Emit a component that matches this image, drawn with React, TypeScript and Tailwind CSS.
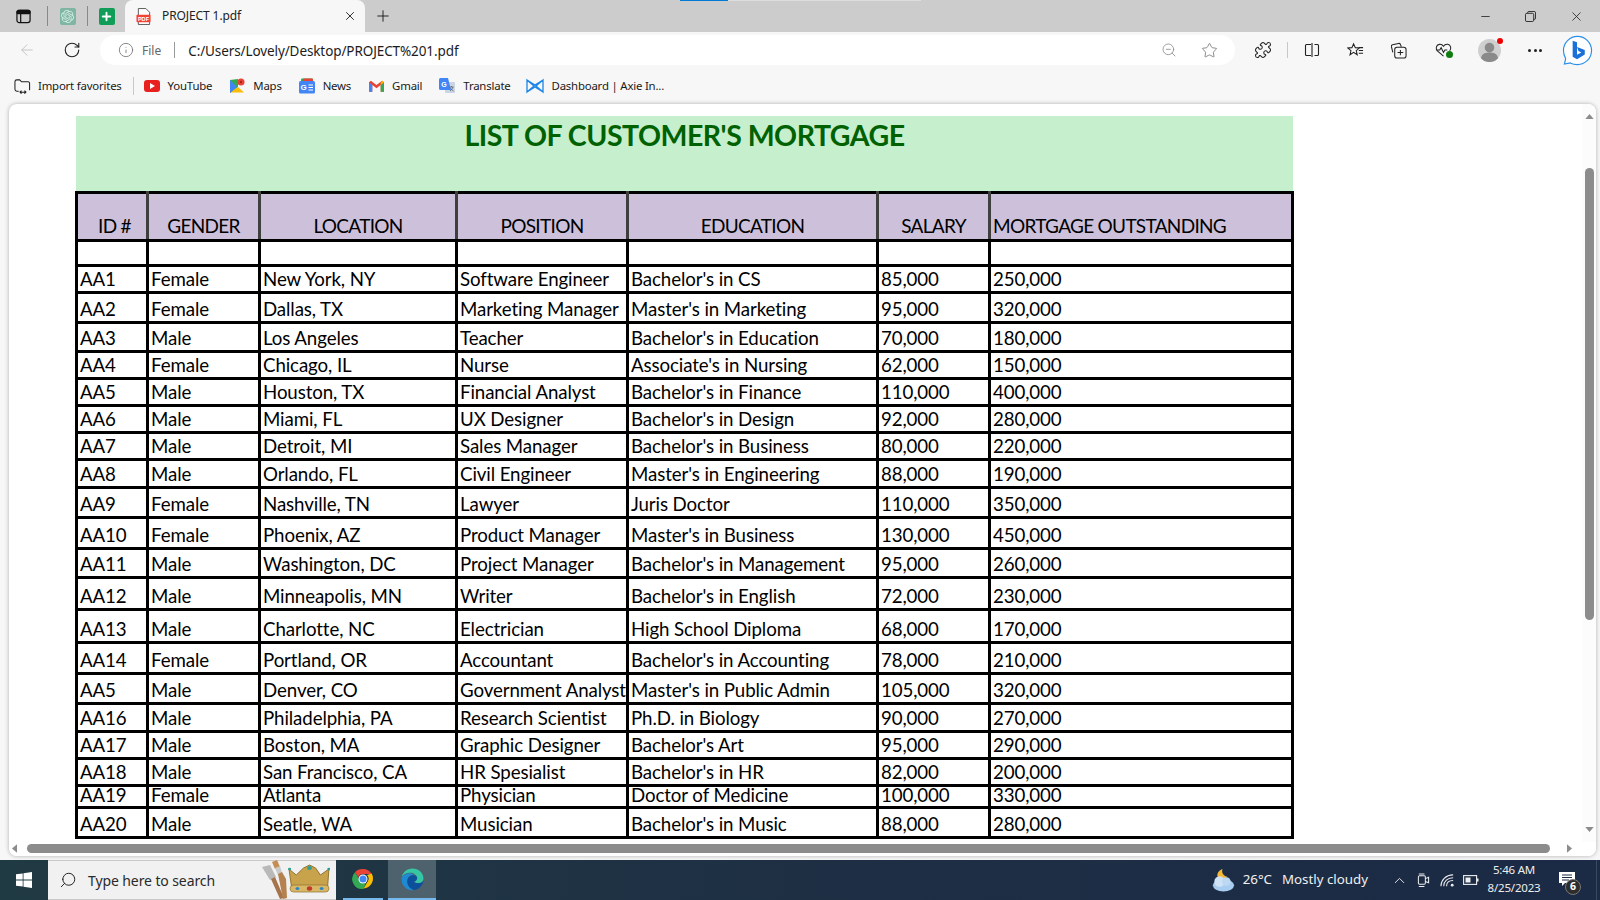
import React from "react";
import { ArrowLeft, RotateCw, Info, ZoomOut, Star, Puzzle, Minus, X, Plus, Search, ChevronUp } from "lucide-react";
import { SiOpenai } from "react-icons/si";

type Row = { h: number; c: string[] };
const rows: Row[] = [
  { h: 25, c: ["", "", "", "", "", "", ""] },
  { h: 27, c: ["AA1", "Female", "New York, NY", "Software Engineer", "Bachelor's in CS", "85,000", "250,000"] },
  { h: 30, c: ["AA2", "Female", "Dallas, TX", "Marketing Manager", "Master's in Marketing", "95,000", "320,000"] },
  { h: 29, c: ["AA3", "Male", "Los Angeles", "Teacher", "Bachelor's in Education", "70,000", "180,000"] },
  { h: 27, c: ["AA4", "Female", "Chicago, IL", "Nurse", "Associate's in Nursing", "62,000", "150,000"] },
  { h: 27, c: ["AA5", "Male", "Houston, TX", "Financial Analyst", "Bachelor's in Finance", "110,000", "400,000"] },
  { h: 27, c: ["AA6", "Male", "Miami, FL", "UX Designer", "Bachelor's in Design", "92,000", "280,000"] },
  { h: 27, c: ["AA7", "Male", "Detroit, MI", "Sales Manager", "Bachelor's in Business", "80,000", "220,000"] },
  { h: 28, c: ["AA8", "Male", "Orlando, FL", "Civil Engineer", "Master's in Engineering", "88,000", "190,000"] },
  { h: 30, c: ["AA9", "Female", "Nashville, TN", "Lawyer", "Juris Doctor", "110,000", "350,000"] },
  { h: 31, c: ["AA10", "Female", "Phoenix, AZ", "Product Manager", "Master's in Business", "130,000", "450,000"] },
  { h: 29, c: ["AA11", "Male", "Washington, DC", "Project Manager", "Bachelor's in Management", "95,000", "260,000"] },
  { h: 32, c: ["AA12", "Male", "Minneapolis, MN", "Writer", "Bachelor's in English", "72,000", "230,000"] },
  { h: 33, c: ["AA13", "Male", "Charlotte, NC", "Electrician", "High School Diploma", "68,000", "170,000"] },
  { h: 31, c: ["AA14", "Female", "Portland, OR", "Accountant", "Bachelor's in Accounting", "78,000", "210,000"] },
  { h: 30, c: ["AA5", "Male", "Denver, CO", "Government Analyst", "Master's in Public Admin", "105,000", "320,000"] },
  { h: 28, c: ["AA16", "Male", "Philadelphia, PA", "Research Scientist", "Ph.D. in Biology", "90,000", "270,000"] },
  { h: 27, c: ["AA17", "Male", "Boston, MA", "Graphic Designer", "Bachelor's Art", "95,000", "290,000"] },
  { h: 27, c: ["AA18", "Male", "San Francisco, CA", "HR Spesialist", "Bachelor's in HR", "82,000", "200,000"] },
  { h: 22, c: ["AA19", "Female", "Atlanta", "Physician", "Doctor of Medicine", "100,000", "330,000"] },
  { h: 30, c: ["AA20", "Male", "Seatle, WA", "Musician", "Bachelor's in Music", "88,000", "280,000"] },
];

const cellBase = "border-[3px] border-black align-bottom p-0 pl-[2px] whitespace-nowrap text-[18.7px] tracking-[-0.1px] leading-[14px] text-black";
const thBase = "border-y-[3px] border-y-black align-bottom p-0 pb-[1px] font-normal text-[19px] tracking-[-0.7px] leading-[25px] text-black bg-[#ccc0da] overflow-hidden whitespace-nowrap";

function Triangle({ dir }: { dir: "u" | "d" | "l" | "r" }) {
  const pts = { u: "0,6 5,0 10,6", d: "0,0 10,0 5,6", l: "6,0 6,10 0,5", r: "0,0 0,10 6,5" }[dir];
  const box = dir === "u" || dir === "d" ? "0 0 10 6" : "0 0 6 10";
  const cls = dir === "u" || dir === "d" ? "w-[9px] h-[5px]" : "w-[5px] h-[9px]";
  return <svg viewBox={box} className={cls}><polygon points={pts} fill="#8c8c8c" /></svg>;
}

function PdfIcon() {
  return (
    <svg viewBox="0 0 16 18" className="w-[15px] h-[17px]">
      <path d="M2.5 0.5h8l4 4v13h-12z" fill="#fff" stroke="#555" strokeWidth="1" />
      <rect x="0.5" y="7" width="15" height="8" rx="1" fill="#f44336" />
      <text x="8" y="13.5" textAnchor="middle" fontSize="6" fontWeight="700" fill="#fff" fontFamily="Liberation Sans">PDF</text>
    </svg>
  );
}

function SidebarIcon() {
  return (
    <svg viewBox="0 0 16 16" className="w-[15px] h-[15px]" fill="none" stroke="#111" strokeWidth="1.3">
      <rect x="1" y="1.5" width="14" height="13" rx="2.5" />
      <rect x="1" y="1.5" width="14" height="3.5" rx="1.5" fill="#111" />
      <path d="M5 5v9" stroke="#111" />
    </svg>
  );
}

function Bookmark({ icon, label }: { icon: React.ReactNode; label: string }) {
  return (
    <div className="flex items-center gap-[8px] mr-[17px]">
      <span className="flex items-center justify-center w-[16px] h-[16px]">{icon}</span>
      <span className="text-[11.4px] text-[#1a1a1a] whitespace-nowrap tracking-[-0.2px]">{label}</span>
    </div>
  );
}

function Chrome() {
  return (
    <svg viewBox="0 0 48 48" className="w-[24px] h-[24px]">
      <path d="M24 4a20 20 0 0 1 17.3 10H24a10 10 0 0 0-9.5 6.9L8 10.3A20 20 0 0 1 24 4z" fill="#ea4335" />
      <path d="M41.3 14A20 20 0 0 1 25 44l9-15.2A10 10 0 0 0 32 17z" fill="#fbbc05" transform="translate(0 -1)" />
      <path d="M8 10.3l8.7 15A10 10 0 0 0 30 31.5L25 44A20 20 0 0 1 8 10.3z" fill="#34a853" />
      <circle cx="24" cy="24" r="9" fill="#fff" />
      <circle cx="24" cy="24" r="7" fill="#4285f4" />
    </svg>
  );
}

function Edge() {
  return (
    <svg viewBox="0 0 48 48" className="w-[25px] h-[25px]">
      <path d="M24 3c11 0 21 8 21 19 0 6-5 9-10 9-4 0-7-1-8-3 3-1 5-3 5-7 0-6-6-10-12-10C11 11 5 15 3 21 5 10 13 3 24 3z" fill="#37c6a4" />
      <path d="M3 21c3-6 9-9 15-9 4 0 7 1 9 3-8 0-13 5-13 13 0 8 6 14 14 16C15 47 3 37 3 24z" fill="#1f8ad4" />
      <path d="M14 28c0-7 5-12 12-12 4 0 7 2 7 5 0 4-3 6-6 7 1 3 4 3 8 3 4 0 8-1 10-4-2 10-10 17-19 17-7-2-12-9-12-16z" fill="#0c4f9a" />
    </svg>
  );
}

function Tools() {
  return (
    <svg viewBox="0 0 72 40" className="w-[72px] h-[40px]">
      <path d="M4 7l8-2 6 12-6 3z" fill="#b9b9b9" />
      <path d="M13 19l4-2 9 21-4 1z" fill="#a5744a" />
      <path d="M14 2l5-2 3 7-5 2z" fill="#c58d54" />
      <path d="M17 8l5-2 2 7-4 2z" fill="#c9c9c9" />
      <path d="M20 14l4-2 4 7 1 19-4 1z" fill="#b5824f" />
      <g transform="translate(-1.7 0) scale(1.21 1)">
        <path d="M29 26 L27 9 L33 15 L39 8 L44 5 L49 8 L53 15 L60 9 L59 26z" fill="#c9a24c" stroke="#8a6a24" strokeWidth="0.8" />
        <rect x="28" y="25" width="32" height="7" rx="3" fill="#d8b866" stroke="#8a6a24" strokeWidth="0.6" />
        <circle cx="44" cy="28.500" r="2.200" fill="#c0392b" />
        <circle cx="34" cy="28.500" r="1.600" fill="#2e86c1" />
        <circle cx="54" cy="28.500" r="1.600" fill="#2e86c1" />
        <circle cx="44" cy="8" r="2" fill="#2aa198" />
        <circle cx="27.500" cy="9" r="1.300" fill="#2aa198" />
        <circle cx="60" cy="9" r="1.300" fill="#2aa198" />
      </g>
    </svg>
  );
}

export default function App() {
  const headers = [
    { t: "ID #", cls: "border-l-[3px] border-l-black border-r-[3px] border-r-[#3f3f3f] pl-[5px] text-center" },
    { t: "GENDER", cls: "border-x-[3px] border-x-[#3f3f3f] text-center" },
    { t: "LOCATION", cls: "border-x-[3px] border-x-[#3f3f3f] text-center" },
    { t: "POSITION", cls: "border-x-[3px] border-x-[#3f3f3f] text-center" },
    { t: "EDUCATION", cls: "border-x-[3px] border-x-[#3f3f3f] text-center" },
    { t: "SALARY", cls: "border-x-[3px] border-x-[#3f3f3f] text-center" },
    { t: "MORTGAGE OUTSTANDING", cls: "border-l-[3px] border-l-[#3f3f3f] border-r-[3px] border-r-black pl-[2px] text-left" },
  ];
  return (
    <div className="w-[1600px] h-[900px] overflow-hidden flex flex-col bg-[#f7f7f7] relative font-['Noto_Sans',sans-serif]">
      {/* Loading sliver */}
      <div className="absolute top-0 left-[680px] w-[241px] h-[1px] bg-[#dddddd]">
        <div className="w-[48px] h-[1px] bg-[#0078d4]" />
      </div>
      {/* Title bar */}
      <div className="h-[32px] bg-[#cccccc] flex items-center shrink-0">
        <div className="w-[47px] flex justify-center"><SidebarIcon /></div>
        <div className="w-[1px] h-[20px] bg-[#888]" />
        <div className="w-[39px] flex justify-center">
          <span className="w-[16px] h-[17px] rounded-[2px] bg-[#7fb5a3] flex items-center justify-center"><SiOpenai className="w-[13px] h-[13px] text-[#d8efe6]" /></span>
        </div>
        <div className="w-[1px] h-[20px] bg-[#888]" />
        <div className="w-[37px] flex justify-center">
          <span className="w-[16px] h-[17px] rounded-[2px] bg-[#0f9d58] flex items-center justify-center"><Plus className="w-[13px] h-[13px] text-white" strokeWidth={3.5} /></span>
        </div>
        <div className="w-[240px] h-[32px] bg-[#f7f7f7] rounded-t-[8px] flex items-center pl-[11px] pr-[8px]">
          <PdfIcon />
          <span className="ml-[11px] text-[12px] text-[#222] flex-1 tracking-[-0.1px]">PROJECT 1.pdf</span>
          <X className="w-[14px] h-[14px] text-[#222]" strokeWidth={1.6} />
        </div>
        <div className="w-[36px] flex justify-center"><Plus className="w-[18px] h-[18px] text-[#222]" strokeWidth={1.3} /></div>
        <div className="flex-1" />
        <div className="w-[45px] flex justify-center"><Minus className="w-[13px] h-[13px] text-[#222]" strokeWidth={1.5} /></div>
        <div className="w-[45px] flex justify-center">
          <svg viewBox="0 0 12 12" className="w-[11px] h-[11px]" fill="none" stroke="#222" strokeWidth="1"><rect x="0.5" y="2.5" width="9" height="9" rx="1.5" /><path d="M3 2.5V1.5a1 1 0 0 1 1-1h6a1.5 1.5 0 0 1 1.5 1.5v6a1 1 0 0 1-1 1h-1" /></svg>
        </div>
        <div className="w-[47px] flex justify-center"><X className="w-[15px] h-[15px] text-[#222]" strokeWidth={1.3} /></div>
      </div>
      {/* Toolbar */}
      <div className="h-[36px] flex items-center shrink-0">
        <div className="w-[54px] flex justify-center"><ArrowLeft className="w-[18px] h-[18px] text-[#c4c4c4]" strokeWidth={1.3} /></div>
        <div className="w-[36px] flex justify-center"><RotateCw className="w-[18px] h-[18px] text-[#222]" strokeWidth={1.5} /></div>
        <div className="ml-[10px] w-[1135px] h-[30px] bg-white rounded-full flex items-center pl-[18px] pr-[17px]">
          <Info className="w-[16px] h-[16px] text-[#777]" strokeWidth={1.3} />
          <span className="ml-[8px] pt-[2px] text-[12px] text-[#666]">File</span>
          <span className="ml-[13px] w-[1px] h-[16px] bg-[#999]" />
          <span className="ml-[13px] pt-[2px] text-[13.5px] text-[#1c1c1c] flex-1 tracking-[-0.1px]">C:/Users/Lovely/Desktop/PROJECT%201.pdf</span>
          <ZoomOut className="w-[16px] h-[16px] text-[#888]" strokeWidth={1.2} />
          <Star className="ml-[24px] w-[17px] h-[17px] text-[#777]" strokeWidth={1.2} />
        </div>
        <div className="w-[56px] flex justify-center"><Puzzle className="w-[18px] h-[18px] text-[#222]" strokeWidth={1.4} /></div>
        <div className="w-[1px] h-[16px] bg-[#c8c8c8] -ml-[4px]" />
        <div className="w-[47px] flex justify-center">
          <svg viewBox="0 0 16 16" className="w-[16px] h-[16px]" fill="none" stroke="#222" strokeWidth="1.1"><path d="M7 2.5H2.5a1 1 0 0 0-1 1v9a1 1 0 0 0 1 1H7M8 1v14M10.5 2.5h3a1 1 0 0 1 1 1v9a1 1 0 0 1-1 1h-3" /></svg>
        </div>
        <div className="w-[40px] flex justify-center">
          <svg viewBox="0 0 18 16" className="w-[17px] h-[16px]" fill="none" stroke="#222" strokeWidth="1.1"><path d="M7 1.5l1.8 4 4.2.4-3.2 2.8 1 4.3L7 10.4l-3.8 2.6 1-4.3L1 5.9l4.2-.4z" /><path d="M12.5 5.5H17M12.5 8.5H17M12.5 11.5H17" /></svg>
        </div>
        <div className="w-[47px] flex justify-center">
          <svg viewBox="0 0 18 18" className="w-[17px] h-[17px]" fill="none" stroke="#222" strokeWidth="1.1"><path d="M3 11L1.5 5c-.2-1 .3-1.8 1.2-2L9 1.5c1-.2 1.7.2 2 1L12 5" /><rect x="5" y="5.5" width="12" height="11.5" rx="2.5" /><path d="M11 8.5v5.5M8 11.2h6" /></svg>
        </div>
        <div className="w-[42px] flex justify-center relative">
          <svg viewBox="0 0 18 18" className="w-[17px] h-[17px]" fill="none" stroke="#222" strokeWidth="1.1"><path d="M9 15L2.5 9.5C.5 7.5 1 3 4.5 2.5 6.5 2.2 8 3 9 4.5 10 3 11.5 2.2 13.5 2.5 17 3 17.5 7.5 15.5 9.5M1 8.5h4L6.5 6 9 11l1.5-2.5H13" /></svg>
          <span className="absolute left-[24px] top-[9px] w-[7px] h-[7px] rounded-full bg-[#107c10]" />
        </div>
        <div className="w-[50px] flex justify-center relative">
          <svg viewBox="0 0 24 24" className="w-[23px] h-[23px]"><circle cx="12" cy="12" r="12" fill="#cfcfcf" /><circle cx="12" cy="9" r="5" fill="#8a8a8a" /><path d="M3 20c1-5 5-6 9-6s8 1 9 6a12 12 0 0 1-18 0z" fill="#8a8a8a" /></svg>
          <span className="absolute left-[33px] -top-[1px] w-[6px] h-[6px] rounded-full bg-[#ee0000]" />
        </div>
        <div className="w-[42px] flex justify-center gap-[2.5px]">
          <span className="w-[3px] h-[3px] rounded-full bg-[#222]" />
          <span className="w-[3px] h-[3px] rounded-full bg-[#222]" />
          <span className="w-[3px] h-[3px] rounded-full bg-[#222]" />
        </div>
        <div className="w-[42px] flex justify-center">
          <svg viewBox="0 0 32 32" className="w-[31px] h-[31px]">
            <path d="M16 1.5C8 1.5 1.5 8 1.5 16c0 3 1 6 2.3 8.5L2.5 30l6-1.2c2 1 4.7 1.7 7.5 1.7 8 0 14.5-6.500 14.5-14.500S24 1.500 16 1.500z" fill="#fff" stroke="#2b8fe8" strokeWidth="1.2" />
            <path d="M11 6l4.500 1.500v13L20 18l-3-1.500-1.500-4 8 3v4.500L15.500 25 11 22.500z" fill="#1a6fd8" />
          </svg>
        </div>
      </div>
      {/* Favorites bar */}
      <div className="h-[36px] flex items-center pl-[14px] shrink-0">
        <div className="flex items-center">
          <svg viewBox="0 0 18 18" className="w-[17px] h-[17px]" fill="none" stroke="#222" strokeWidth="1.1"><path d="M3 2h3l2 2h7a2 2 0 0 1 1.500 1.500V13M5 14H3a2 2 0 0 1-2-2V4a2 2 0 0 1 2-2M6 15h7M6 15l2-1.500M6 15l2 1.500M13 15l-2-1.500M13 15l-2 1.500" /></svg>
          <span className="ml-[7px] text-[11.4px] text-[#1a1a1a] tracking-[-0.2px] whitespace-nowrap">Import favorites</span>
          <span className="ml-[11px] mr-[10px] w-[1px] h-[18px] bg-[#c8c8c8]" />
        </div>
        <Bookmark label="YouTube" icon={<svg viewBox="0 0 16 12" className="w-[16px] h-[12px]"><rect width="16" height="12" rx="3" fill="#e8201e" /><path d="M6 3l5 3-5 3z" fill="#fff" /></svg>} />
        <Bookmark label="Maps" icon={<svg viewBox="0 0 16 16" className="w-[16px] h-[16px]"><path d="M1 2l8-1v8l-8 6z" fill="#34a853" /><path d="M9 9l6 5.500H1z" fill="#fbbc05" /><path d="M1 2l7 7-7 6z" fill="#4285f4" /><circle cx="12" cy="4" r="3.500" fill="#ea4335" /><circle cx="12" cy="4" r="1.200" fill="#a52714" /></svg>} />
        <Bookmark label="News" icon={<svg viewBox="0 0 16 16" className="w-[16px] h-[16px]"><rect x="2" y="0.5" width="12" height="5" rx="1" fill="#34a853" /><rect x="4" y="0.500" width="10" height="3" rx="1" fill="#ea4335" /><rect y="3" width="16" height="12.500" rx="1.500" fill="#4285f4" /><text x="4.500" y="12" textAnchor="middle" fontSize="8" fontWeight="700" fill="#fff" fontFamily="Liberation Sans">G</text><path d="M9.500 7h4.500M9.500 9.500h4.500M9.500 12h4.500" stroke="#fff" strokeWidth="1.100" /></svg>} />
        <Bookmark label="Gmail" icon={<svg viewBox="0 0 16 12" className="w-[15px] h-[12px]"><path d="M0 2v10h3.500V5L8 8.500 12.500 5v7H16V2L14 .5 8 5 2 .5z" fill="#ea4335" /><path d="M0 2v10h3.500V5z" fill="#4285f4" /><path d="M12.500 5v7H16V2z" fill="#34a853" /><path d="M14 .5L16 2l-3.500 3V2.500z" fill="#fbbc05" /></svg>} />
        <Bookmark label="Translate" icon={<svg viewBox="0 0 16 16" className="w-[16px] h-[16px]"><rect x="6" y="4" width="10" height="11" rx="1" fill="#c9d4e4" /><path d="M1.500 0h7.500l3 12H1.500A1.500 1.500 0 0 1 0 10.500v-9A1.500 1.500 0 0 1 1.500 0z" fill="#4285f4" /><text x="5" y="9" textAnchor="middle" fontSize="7" fontWeight="700" fill="#fff" fontFamily="Liberation Sans">G</text><path d="M10.500 9h4M12.500 8v1M11 13c1.500-1 2.500-2.500 3-4M11.500 10.500l3 2.500" stroke="#5f6368" strokeWidth="0.8" fill="none" /></svg>} />
        <div className="flex items-center gap-[8px] ml-[-2px]">
          <svg viewBox="0 0 18 16" className="w-[18px] h-[16px]" fill="none" stroke="#1c86e8" strokeWidth="1.300"><path d="M1 2l7 6-7 6zM17 2l-7 6 7 6zM1 2l8 5 8-5M1 14l8-5 8 5" /></svg>
          <span className="text-[11.4px] text-[#1a1a1a] tracking-[-0.2px] whitespace-nowrap">Dashboard | Axie In...</span>
        </div>
      </div>
      {/* Viewer */}
      <div className="ml-[9px] mr-[4px] h-[752px] shrink-0 bg-white rounded-[8px] shadow-[0_0_4px_rgba(0,0,0,0.3)] flex flex-col overflow-hidden">
        <div className="flex-1 flex min-h-0">
          <div className="flex-1 pl-[67px] pt-[12px] overflow-hidden font-['Lato',sans-serif]">
            <div className="w-[1217px] h-[75px] bg-[#c6efce] text-center text-[#006100] font-bold text-[28.5px] tracking-[-0.5px] leading-[38px]">LIST OF CUSTOMER'S MORTGAGE</div>
            <table className="border-collapse table-fixed w-[1219px] -ml-[1px] bg-white">
              <colgroup>
                <col className="w-[71px]" /><col className="w-[112px]" /><col className="w-[197px]" /><col className="w-[171px]" /><col className="w-[250px]" /><col className="w-[112px]" /><col className="w-[303px]" />
              </colgroup>
              <thead>
                <tr className="h-[48px]">
                  {headers.map((h) => <th key={h.t} className={`${thBase} ${h.cls}`}>{h.t}</th>)}
                </tr>
              </thead>
              <tbody>
                {rows.map((r, i) => (
                  <tr key={i} style={{ height: r.h }}>
                    {r.c.map((v, j) => <td key={j} className={`${cellBase} ${r.h < 25 ? "pb-[4px]" : "pb-[5px]"}`}>{v}</td>)}
                  </tr>
                ))}
              </tbody>
            </table>
          </div>
          <div className="w-[14px] bg-[#fcfcfc] flex flex-col items-center pl-[1px] pt-[10px] pb-[10px]">
            <Triangle dir="u" />
            <div className="mt-[49px] w-[9px] h-[452px] rounded-[5px] bg-[#8c8c8c]" />
            <div className="flex-1" />
            <Triangle dir="d" />
          </div>
        </div>
        <div className="h-[14px] shrink-0 flex items-center bg-white pb-[2px]">
          <div className="w-[18px] flex justify-start pl-[3px]"><Triangle dir="l" /></div>
          <div className="w-[1523px] h-[9px] rounded-[5px] bg-[#8c8c8c]" />
          <div className="ml-[17px]"><Triangle dir="r" /></div>
        </div>
      </div>
      <div className="h-[4px] shrink-0" />
      {/* Taskbar */}
      <div className="h-[40px] shrink-0 flex items-center bg-linear-to-r from-[#203a43] via-[#1e2f44] to-[#1b2a45] text-white">
        <div className="w-[48px] flex justify-center">
          <svg viewBox="0 0 16 16" className="w-[16px] h-[16px]" fill="#fff"><path d="M0 2.300l6.700-.9v6.100H0zM7.500 1.300L16 0v7.500H7.500zM0 8.400h6.700v6.200L0 13.700zM7.500 8.400H16V16l-8.500-1.200z" /></svg>
        </div>
        <div className="w-[288px] h-[40px] bg-[#f1f1f1] border-y border-[#c9c9c9] flex items-center pl-[11px] text-[#2a2a2a]">
          <Search className="w-[18px] h-[18px] -scale-x-100 text-[#222]" strokeWidth={1.3} />
          <span className="ml-[11px] text-[14px] flex-1 tracking-[-0.1px]">Type here to search</span>
          <Tools />
          <span className="w-[6px]" />
        </div>
        <div className="ml-[7px] w-[40px] h-[40px] flex items-center justify-center border-b-[2px] border-b-[#76b9ed]"><Chrome /></div>
        <div className="ml-[5px] w-[48px] h-[40px] bg-[#4d626c] flex items-center justify-center border-b-[2px] border-b-[#76b9ed]"><Edge /></div>
        <div className="flex-1" />
        <div className="flex items-center text-[13.3px] text-[#f0f0f0]">
          <svg viewBox="0 0 26 26" className="w-[25px] h-[25px]"><path d="M13 1c-1 3 0 7 5 8-2 2-7 3-10 0-1-2 0-6 5-8z" fill="#f5b93a" /><ellipse cx="14" cy="18" rx="11" ry="6.500" fill="#a8cdf0" /><circle cx="10" cy="14" r="5.500" fill="#cfe3f7" /><circle cx="17" cy="14" r="4.500" fill="#bcd8f3" /></svg>
          <span className="ml-[8px]">26°C</span>
          <span className="ml-[10px] mr-[23px]">Mostly cloudy</span>
          <ChevronUp className="w-[17px] h-[17px]" strokeWidth={1.3} />
          <svg viewBox="0 0 14 16" className="ml-[9px] w-[13px] h-[15px]" fill="none" stroke="#eee" strokeWidth="1.100"><rect x="1.500" y="3" width="7.500" height="9" rx="1.200" /><path d="M9 6l3.500-1.500v6L9 9M2 1h6M2 14.500h6" /></svg>
          <svg viewBox="0 0 16 16" className="ml-[10px] w-[15px] h-[15px]" fill="none" stroke="#eee" strokeWidth="1.100"><path d="M1 14c0-6 5-12 13-12M4 14c0-5 4-9 10-9M7 14c0-3 2-6 7-6" /><circle cx="13" cy="13" r="1.500" fill="#eee" stroke="none" /></svg>
          <svg viewBox="0 0 16 10" className="ml-[8px] w-[16px] h-[10px]" fill="none" stroke="#eee" strokeWidth="1.100"><rect x="0.600" y="0.600" width="13" height="8.800" /><rect x="2.500" y="2.500" width="5" height="5" fill="#eee" stroke="none" /><rect x="14" y="3.500" width="1.500" height="3" fill="#eee" stroke="none" /></svg>
        </div>
        <div className="ml-[4px] w-[62px] flex flex-col items-center text-[11.5px] leading-[18px] text-[#eee] tracking-[-0.2px] -mt-[2px] whitespace-nowrap">
          <span>5:46 AM</span>
          <span>8/25/2023</span>
        </div>
        <div className="ml-[1px] w-[42px] h-[40px] relative flex items-center justify-center">
          <svg viewBox="0 0 16 15" className="w-[16px] h-[15px] -mt-[2px]"><path d="M0 0h16v11H6l-3 3v-3H0z" fill="#fff" /><path d="M3 3h10M3 5.500h10M3 8h7" stroke="#1b2a45" strokeWidth="1" /></svg>
          <span className="absolute left-[19px] top-[19px] w-[16px] h-[16px] rounded-full bg-[#2d2d2d] border border-[#777] text-[10.500px] font-bold flex items-center justify-center">6</span>
        </div>
        <div className="w-[12px] h-[40px] flex justify-end pr-[3px]"><span className="w-[1px] h-[40px] bg-[#3c4a60]" /></div>
      </div>
    </div>
  );
}
